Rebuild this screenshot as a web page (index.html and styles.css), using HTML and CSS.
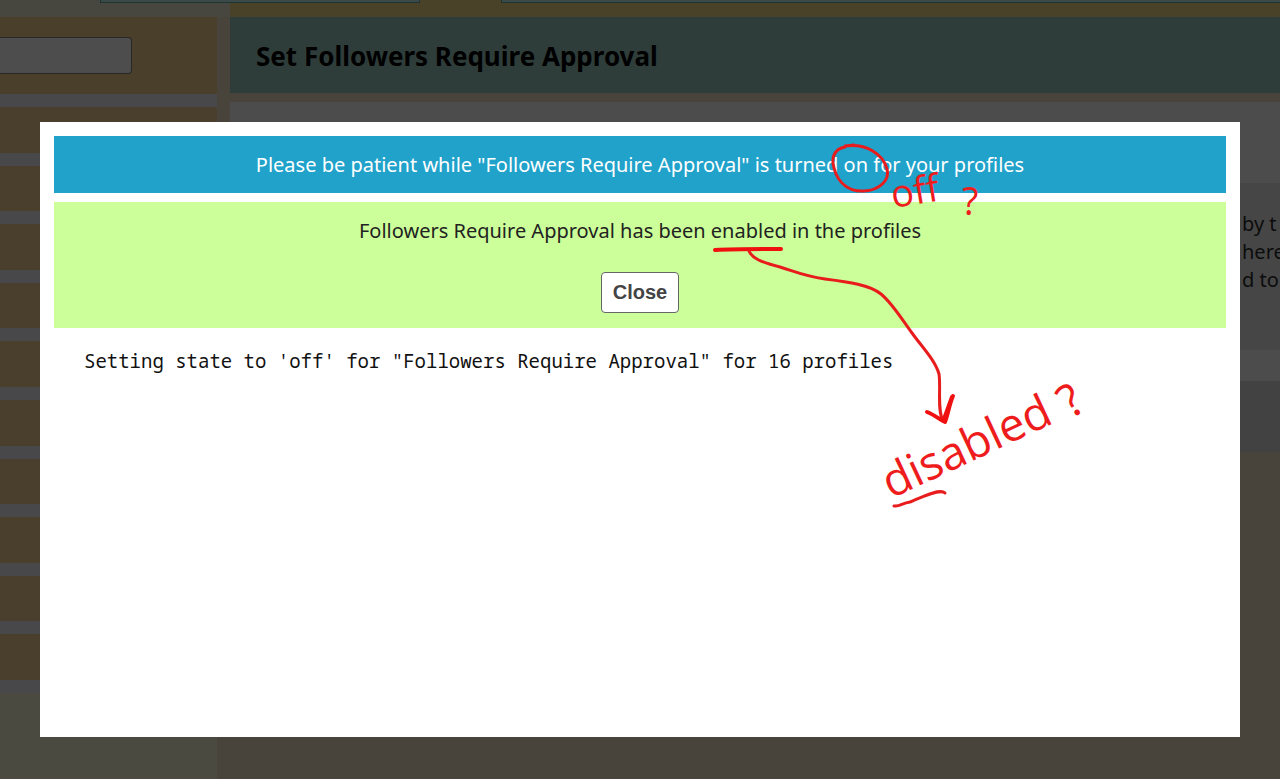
FILE: index.html
```html
<!DOCTYPE html>
<html lang="en">
<head>
<meta charset="utf-8">
<meta name="viewport" content="width=device-width, initial-scale=1">
<title>Set Followers Require Approval</title>
<link rel="stylesheet" href="styles.css">
</head>
<body>
<div class="page">
  <div class="topbar">
    <div class="tab tab-first"></div>
    <div class="tab tab-last"></div>
  </div>
  <div class="columns">
    <aside class="sidebar">
      <div class="search"><input class="search-box" type="text" aria-label="Search"></div>
      <div class="menu">
        <div class="menu-item"></div><div class="menu-item"></div>
        <div class="menu-item"></div><div class="menu-item"></div>
        <div class="menu-item"></div><div class="menu-item"></div>
        <div class="menu-item"></div><div class="menu-item"></div>
        <div class="menu-item"></div><div class="menu-item"></div>
      </div>
    </aside>
    <main class="main">
      <h1 class="title">Set Followers Require Approval</h1>
      <div class="panel">
        <div class="help"><p class="help-text">by t<br>here<br>d to</p></div>
        <div class="footer-row"></div>
      </div>
    </main>
  </div>
</div>
<div class="overlay">
  <section class="modal" role="dialog" aria-label="Progress">
    <p class="notice">Please be patient while "Followers Require Approval" is turned on for your profiles</p>
    <div class="result">
      <p class="result-text">Followers Require Approval has been enabled in the profiles</p>
      <button class="close" type="button">Close</button>
    </div>
    <pre class="log">Setting state to 'off' for "Followers Require Approval" for 16 profiles</pre>
  </section>
  <svg class="ink" width="1280" height="779" viewBox="0 0 1280 779">
    <g class="stroke">
      <path d="M845 147C834 149 831 158 834 168C838 184 850 192 864 191C880 190 890 180 887 169C883 154 866 143 845 146L854 145"/>
      <path class="thick" d="M715 250C735 249 760 249 781 249"/>
      <path d="M749 251C752 258 760 262 780 267C796 272 804 276 825 279C849 282 870 285 881 294C892 303 901 318 912 333C922 347 935 360 939 374C941 388 937 410 943 421"/>
      <path class="thick" d="M927 412C935 415 940 420 945 422C948 415 949 405 953 396M944 419L952 397"/>
      <path d="M894 506C900 507 902 503 910 502C922 497 940 488 945 493"/>
    </g>
    <text class="hand hand-small" transform="translate(893 208) rotate(-9)">off</text>
    <text class="hand hand-small" transform="translate(962 215)">?</text>
    <text class="hand" transform="translate(891 499) rotate(-25)">disabled</text>
    <text class="hand" transform="translate(1072 419) rotate(-36)">?</text>
  </svg>
</div>
</body>
</html>
```
FILE: styles.css
```css
* { box-sizing: border-box; }
body {
  margin: 0;
  background: #48443b;
  color: #000;
  font-family: "Noto Sans", "Open Sans", sans-serif;
  font-size: 20px;
  overflow: hidden;
}
p, h1, pre { margin: 0; }

.page { display: flex; flex-direction: column; min-height: 100vh; }
.topbar {
  display: flex;
  justify-content: space-between;
  height: 17px;
  padding-left: 100px;
  background: linear-gradient(90deg, #47473f 230px, #4a4129 230px);
}
.tab { height: 3px; background: #3a4a48; border: 1px solid #1f3533; border-top: 0; }
.tab-first { flex: 0 0 320px; }
.tab-last { flex: 1; margin-left: 81px; border-right: 0; }

.columns { display: flex; flex: 1; }
.sidebar { flex: 0 0 217px; background: #4a4a40; }
.search {
  display: flex;
  padding: 20px 0;
  background: #493f2b;
}
.search-box {
  width: 132px;
  height: 37px;
  background: #4d4d4d;
  border: 1px solid #292826;
  border-left: 0;
  border-radius: 0 4px 4px 0;
}
.menu {
  display: grid;
  grid-auto-rows: 1fr;
  gap: 13px;
  min-height: 599px;
  padding: 13px 0;
  background: #48484a;
}
.menu-item { background: #493f2c; }

.main { flex: 1; min-width: 0; padding-left: 13px; background: #48443b; }
.title {
  padding: 20px 26px 18px;
  background: #2f3d3a;
  font-size: 26px;
  line-height: 38px;
  font-weight: 700;
}
.panel { margin-top: 9px; padding-top: 81px; background: #4c4c4c; }
.help {
  display: flex;
  justify-content: flex-end;
  height: 167px;
  padding-top: 27px;
  background: #464646;
}
.help-text { width: 38px; color: #0c0c0c; line-height: 28px; white-space: nowrap; overflow: hidden; }
.footer-row { height: 102px; border-top: 31px solid #4c4c4c; background: #424242; }

.overlay { position: fixed; inset: 0; padding: 122px 40px 42px; }
.modal {
  display: flex;
  flex-direction: column;
  gap: 9px;
  height: 100%;
  padding: 14px;
  background: #fff;
}
.notice {
  padding: 14px;
  background: #20a2ca;
  color: #fff;
  line-height: 29px;
  text-align: center;
}
.result {
  display: flex;
  flex-direction: column;
  align-items: center;
  gap: 27px;
  padding: 15px 14px;
  background: #cf9;
  color: #222;
}
.result-text { line-height: 28px; }
.close {
  height: 41px;
  padding: 0 11px;
  background: #fff;
  border: 1px solid #666;
  border-radius: 4px;
  color: #444;
  font: 700 20px "Liberation Sans", Arial, sans-serif;
}
.log {
  padding: 10px 30px;
  color: #111;
  font: 19px/28px "Noto Sans Mono", "DejaVu Sans Mono", monospace;
}

.ink { position: absolute; left: 0; top: 0; pointer-events: none; }
.stroke { fill: none; stroke: #e81c1c; stroke-width: 3; stroke-linecap: round; stroke-linejoin: round; }
.thick { stroke: #f01010; stroke-width: 4; }
.hand { fill: #ee1c1c; font: 400 46px "Open Sans", sans-serif; }
.hand-small { font-size: 38px; }
```
